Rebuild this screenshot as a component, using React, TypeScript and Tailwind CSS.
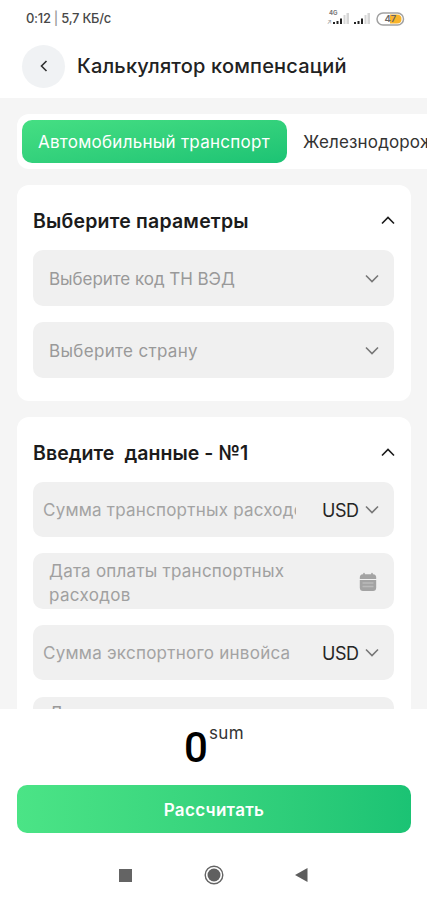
import React from "react";

function Chevron({ up = false, className = "" }: { up?: boolean; className?: string }) {
  return (
    <svg width="14" height="9" viewBox="0 0 14 9" fill="none" className={className}>
      <path d={up ? "M1 7.5 7 1.5l6 6" : "M1 1.5l6 6 6-6"} stroke="currentColor" strokeWidth="1.6" />
    </svg>
  );
}

function CalendarIcon() {
  return (
    <svg width="18" height="20" viewBox="0 0 18 20" className="mt-px">
      <path d="M5 1.500v3M13 1.500v3" stroke="#a3a3a3" strokeWidth="1.600" strokeLinecap="round" />
      <path d="M.8 7V5.500Q.8 2.400 3.800 2.200h10.400Q17.200 2.400 17.200 5.500V7Z" fill="#a3a3a3" />
      <path d="M.8 8h16.400v7.500q0 3.500-3.200 3.500H4Q.8 19 .8 15.500Z" fill="#a3a3a3" />
      <path d="M3.500 11h11M3.500 14.500h11" stroke="#bababa" strokeWidth="1.400" />
    </svg>
  );
}

function SectionHeader({ children }: { children: React.ReactNode }) {
  return (
    <div className="flex h-[65px] items-center justify-between px-4 pt-[8px] text-[19.5px] font-semibold text-[#1b1b1b]">
      {children}
      <Chevron up className="mb-[2px]" />
    </div>
  );
}

function SelectField({ children }: { children: React.ReactNode }) {
  return (
    <div className="flex h-14 items-center justify-between rounded-[10px] bg-[#f0f0f0] pl-4 pr-[15px] text-[#999]">
      <div className="pt-[4px]">{children}</div>
      <Chevron className="text-[#777]" />
    </div>
  );
}

function AmountField({ children }: { children: React.ReactNode }) {
  return (
    <div className="flex h-[55px] shrink-0 items-center rounded-[10px] bg-[#f0f0f0] pl-[10px] pr-[15px] text-[#a3a3a3]">
      <div className="w-[253px] overflow-hidden whitespace-nowrap pt-[3px]">{children}</div>
      <span className="ml-[26px] pt-[2px] text-[18px] tracking-[-0.5px] text-[#252525]">USD</span>
      <Chevron className="ml-auto text-[#777]" />
    </div>
  );
}

function Signal() {
  return (
    <svg width="17" height="13" viewBox="0 0 17 13">
      <path d="M0 10h2v2H0zM3.500 9h2v3h-2zM7 6.500h2V12H7z" fill="#222" />
      <path d="M10.500 3h2v9h-2zM13.500 1h2.500v11h-2.500z" fill="#d6d6d6" />
    </svg>
  );
}

function StatusBar() {
  return (
    <div className="flex h-9 items-center justify-between pl-[26px] pr-[22px] pt-px text-[13px] font-medium text-[#484848]">
      <span className="whitespace-nowrap tracking-[-0.28px]">0:12 <span className="text-[#999]">|</span> 5,7 КБ/с</span>
      <div className="flex items-center">
        <div className="relative flex pl-[6px]">
          <span className="absolute left-[2px] top-[-3px] text-[6px] font-bold leading-[7px] text-[#777]">4G</span>
          <span className="absolute left-0 top-[6px] text-[6px] leading-[7px] text-[#999]">↗</span>
          <Signal />
        </div>
        <span className="ml-1"><Signal /></span>
        <svg className="ml-[5px]" width="29" height="14" viewBox="0 0 29 14">
          <rect x="1" y="1" width="26.500" height="12" rx="6" fill="#fff" stroke="#a1a1a1" strokeWidth="1.500" />
          <path d="M14 2.500h7q4.500 0 4.500 4.500T21 11.500h-7Z" fill="#f8b42c" />
          <text x="8.500" y="10.300" fontFamily="Inter" fontSize="9.500" fontWeight="600" fill="#666">47</text>
        </svg>
      </div>
    </div>
  );
}

export default function App() {
  return (
    <div className="flex h-[900px] w-full flex-col overflow-hidden bg-white font-['Inter',sans-serif] text-[17px]">
      <StatusBar />
      <header className="flex h-[62px] shrink-0 items-center pb-[2px] pl-[22px]">
        <div className="flex h-[43px] w-[43px] items-center justify-center rounded-full bg-[#f0f2f4]">
          <svg width="9" height="14" viewBox="0 0 9 14" fill="none">
            <path d="M7.500 2 2.500 7l5 5" stroke="#303030" strokeWidth="1.600" />
          </svg>
        </div>
        <h1 className="ml-3 whitespace-nowrap text-[20px] font-medium tracking-[0.18px] text-[#222]">Калькулятор компенсаций</h1>
      </header>
      <main className="flex h-[611px] shrink-0 flex-col gap-4 overflow-hidden bg-[#f5f5f5] pl-[17px] pt-4">
        <div className="flex h-[55px] shrink-0 items-center overflow-hidden whitespace-nowrap rounded-l-xl bg-white pl-[5px]">
          <div className="flex h-[43px] w-[265px] shrink-0 items-center rounded-[10px] bg-linear-to-br from-[#45df83] to-[#1bc374] pl-4 pt-[3px] text-white">
            <span className="tracking-[0.26px]">Автомобильный транспорт</span>
          </div>
          <span className="ml-4 pt-[3px] tracking-[0.15px] text-[#333]">Железнодорожный</span>
        </div>
        <section className="h-[216px] w-[394px] shrink-0 rounded-xl bg-white">
          <SectionHeader><h2 className="pt-px tracking-[0.2px]">Выберите параметры</h2></SectionHeader>
          <div className="flex flex-col gap-4 pl-4 pr-[17px]">
            <SelectField><span className="tracking-[-0.05px]">Выберите код ТН ВЭД</span></SelectField>
            <SelectField><span className="tracking-[0.33px]">Выберите страну</span></SelectField>
          </div>
        </section>
        <section className="w-[394px] shrink-0 rounded-t-xl bg-white">
          <SectionHeader><h2 className="whitespace-pre pt-px tracking-[0.06px]">Введите  данные - №1</h2></SectionHeader>
          <div className="flex flex-col gap-4 pl-4 pr-[17px]">
            <AmountField><span className="tracking-[0.22px]">Сумма транспортных расходов</span></AmountField>
            <div className="flex h-14 items-center justify-between rounded-[10px] bg-[#f0f0f0] pl-4 pr-[17px] text-[#a0a0a0]">
              <p className="pt-[3px] leading-[24px]"><span className="tracking-[0.24px]">Дата оплаты транспортных</span><br /><span className="tracking-[0.35px]">расходов</span></p>
              <CalendarIcon />
            </div>
            <AmountField><span className="tracking-[0.25px]">Сумма экспортного инвойса</span></AmountField>
            <div className="mt-px h-14 rounded-[10px] bg-[#f0f0f0] pl-4 pt-[4px] leading-[25px] tracking-[0.24px] text-[#999]">Дата оплаты</div>
          </div>
        </section>
      </main>
      <footer className="flex flex-1 flex-col">
        <div className="flex h-[76px] items-start pl-[184px]">
          <span className="mt-[18px] w-[25px] font-['Roboto',sans-serif] text-[42px] font-medium leading-[42px] text-black">0</span>
          <span className="mt-[14px] leading-5 tracking-[0.3px] text-[#333]">sum</span>
        </div>
        <button className="ml-[17px] h-12 w-[394px] rounded-[10px] bg-linear-to-r from-[#4be486] to-[#1bc374] pt-[3px] font-semibold tracking-[0.3px] text-white">Рассчитать</button>
        <nav className="flex h-[67px] items-center pl-[119px] pt-[17px]">
          <div className="h-[13px] w-[13px] bg-[#646464]" />
          <svg className="ml-[72px]" width="20" height="20" viewBox="0 0 20 20">
            <circle cx="10" cy="10" r="8.800" fill="none" stroke="#646464" strokeWidth="1.400" />
            <circle cx="10" cy="10" r="6.500" fill="#606060" />
          </svg>
          <svg className="ml-[71px]" width="13" height="14" viewBox="0 0 13 14"><path d="M0 7 12.500 0v14Z" fill="#5d5d5d" /></svg>
        </nav>
      </footer>
    </div>
  );
}
